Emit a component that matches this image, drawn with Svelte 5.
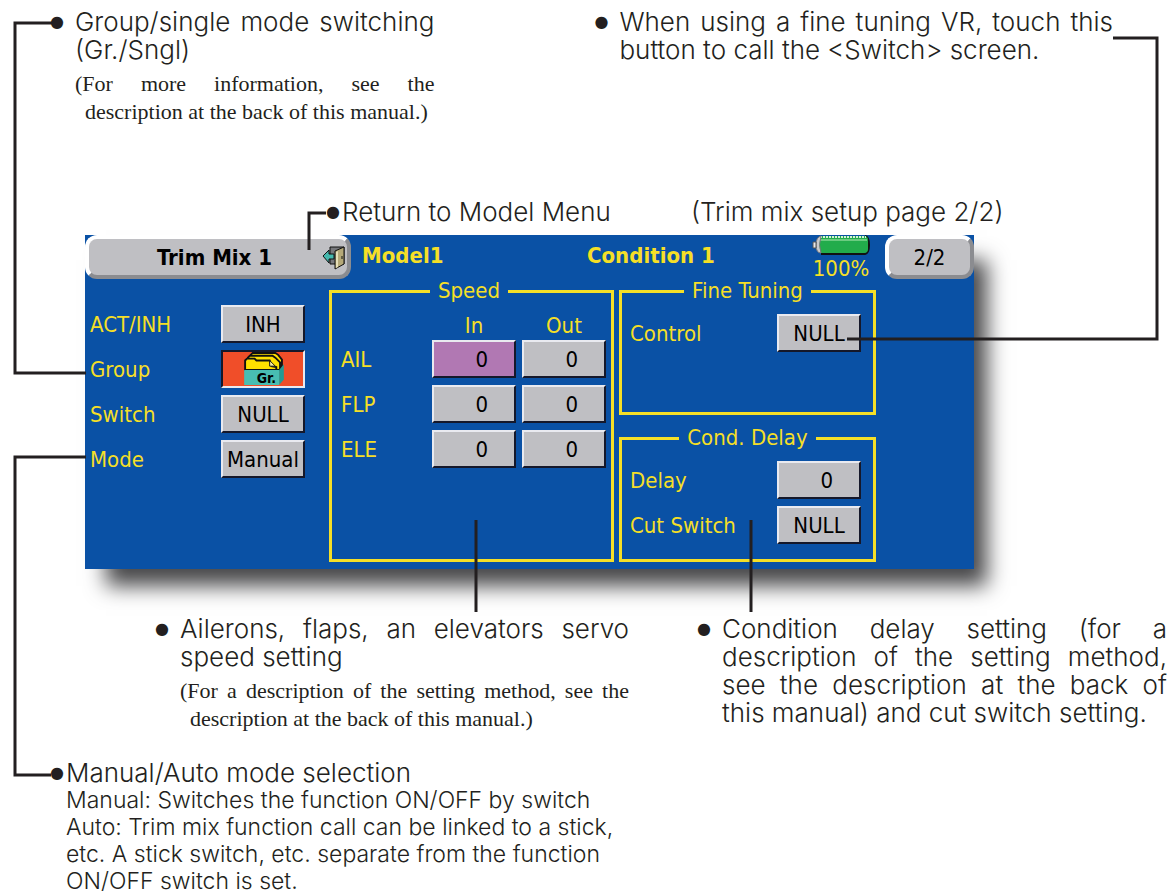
<script lang="ts">
    interface ISetting {
        id: string;
        label: string;
        value: string;
    }

    const settings: ISetting[] = [
        { id: 'act', label: 'ACT/INH', value: 'INH' },
        { id: 'group', label: 'Group', value: 'Gr.' },
        { id: 'switch', label: 'Switch', value: 'NULL' },
        { id: 'mode', label: 'Mode', value: 'Manual' }
    ];

    const surfaces = ['AIL', 'FLP', 'ELE'];
    const directions = ['In', 'Out'];

    let selected = $state('AIL-In');
</script>

<main>
    <svg class="leaders" viewBox="0 0 1176 895" preserveAspectRatio="none" aria-hidden="true">
        <path d="M52 23H15V373H86" />
        <path d="M86 457H15V775H51" />
        <path d="M1113 38H1157V339H847" />
        <path d="M326 213H309V250" />
        <path d="M476 520V612" />
        <path d="M751 520V612" />
    </svg>

    <div class="notes top">
        <section class="note">
            <span class="dot">●</span>
            <div>
                <p class="fill">Group/single mode switching</p>
                <p>(Gr./Sngl)</p>
                <div class="small">
                    <p class="fill">(For more information, see the</p>
                    <p class="inset">description at the back of this manual.)</p>
                </div>
            </div>
        </section>
        <section class="note">
            <span class="dot">●</span>
            <div>
                <p class="fill">When using a fine tuning VR, touch this</p>
                <p>button to call the &lt;Switch&gt; screen.</p>
            </div>
        </section>
    </div>

    <div class="captions">
        <p class="lead"><span class="dot">●</span>Return to Model Menu</p>
        <p>(Trim mix setup page 2/2)</p>
    </div>

    <div class="screen">
        <header>
            <button class="tab title">
                <span>Trim Mix 1</span>
                <svg width="26" height="26" viewBox="0 0 26 26" aria-hidden="true">
                    <path d="M9 2h14v17H9z" fill="#77787c" stroke="#111" />
                    <path d="M14 6l9-4v17l-9 5z" fill="#b5a978" stroke="#111" />
                    <path d="M15 7l2-1v16l-2 1z" fill="#e6dfb8" />
                    <path d="M21 11v3" stroke="#111" />
                    <path d="M2 11l6-6v4h5v5H8v4z" fill="#45b8ad" stroke="#111" />
                </svg>
            </button>
            <strong class="model">Model1</strong>
            <strong class="condition">Condition 1</strong>
            <div class="battery">
                <svg width="58" height="20" viewBox="0 0 58 20" aria-hidden="true">
                    <path d="M9 19h44q4-1 4-9t-4-9" fill="none" stroke="#111" stroke-width="2" />
                    <rect x="6" y="1" width="50" height="17" rx="4" fill="#22ac4b" />
                    <path d="M8 2h46" stroke="#d6f0da" stroke-width="2" stroke-dasharray="2 1" />
                    <path d="M8 5h47" stroke="#6bcb80" stroke-width="2" />
                    <path d="M9 1q-5 1-5 9t5 8q-3-8 0-17z" fill="#c9cacd" stroke="#77787c" />
                    <path d="M4 7H1v6h3z" fill="#e7e7e9" stroke="#555" />
                </svg>
                <span>100%</span>
            </div>
            <button class="tab page">2/2</button>
        </header>

        <div class="body">
            <div class="settings">
                {#each settings as setting}
                    <label for={setting.id}>{setting.label}</label>
                    {#if setting.id === 'group'}
                        <button id={setting.id} class="key group">
                            <svg width="44" height="34" viewBox="0 0 44 36" aria-hidden="true">
                                <path d="M8 18V3l2-2h24l3 2 4 5v10z" fill="#ffe100" stroke="#111" stroke-width="2" />
                                <path d="M5 18V6l2-2h24l3 2 5 5v8z" fill="#ffe100" stroke="#111" stroke-width="2" />
                                <path d="M2 19V9l2-2h8l2 2h14l2 6 5 1v3z" fill="#ffe100" stroke="#111" stroke-width="2" />
                                <path d="M28 9v6h6z" fill="#fff3a0" stroke="#111" />
                                <path d="M38 19l5-6v16l-5 6z" fill="#239b94" />
                                <path d="M1 19h37v16H1z" fill="#48bdb2" />
                            </svg>
                            <span>{setting.value}</span>
                        </button>
                    {:else}
                        <button id={setting.id} class="key">{setting.value}</button>
                    {/if}
                {/each}
            </div>

            <fieldset class="speed">
                <legend>Speed</legend>
                <table>
                    <thead>
                        <tr>
                            <th></th>
                            {#each directions as direction}
                                <th>{direction}</th>
                            {/each}
                        </tr>
                    </thead>
                    <tbody>
                        {#each surfaces as surface}
                            <tr>
                                <th scope="row">{surface}</th>
                                {#each directions as direction}
                                    <td>
                                        <button
                                            class="key number"
                                            class:selected={selected === `${surface}-${direction}`}
                                            onclick={() => (selected = `${surface}-${direction}`)}
                                        >0</button>
                                    </td>
                                {/each}
                            </tr>
                        {/each}
                    </tbody>
                </table>
            </fieldset>

            <div class="side">
                <fieldset>
                    <legend>Fine Tuning</legend>
                    <div class="row">
                        <label for="control">Control</label>
                        <button id="control" class="key">NULL</button>
                    </div>
                </fieldset>
                <fieldset>
                    <legend>Cond. Delay</legend>
                    <div class="row">
                        <label for="delay">Delay</label>
                        <button id="delay" class="key number">0</button>
                    </div>
                    <div class="row">
                        <label for="cut">Cut Switch</label>
                        <button id="cut" class="key">NULL</button>
                    </div>
                </fieldset>
            </div>
        </div>
    </div>

    <div class="notes bottom">
        <section class="note">
            <span class="dot">●</span>
            <div>
                <p class="fill">Ailerons, flaps, an elevators servo</p>
                <p>speed setting</p>
                <div class="small">
                    <p class="fill">(For a description of the setting method, see the</p>
                    <p class="inset">description at the back of this manual.)</p>
                </div>
            </div>
        </section>
        <section class="note">
            <span class="dot">●</span>
            <div>
                <p class="fill">Condition delay setting (for a</p>
                <p class="fill">description of the setting method,</p>
                <p class="fill">see the description at the back of</p>
                <p>this manual) and cut switch setting.</p>
            </div>
        </section>
    </div>

    <section class="mode">
        <p class="lead"><span class="dot">●</span>Manual/Auto mode selection</p>
        <div class="details">
            <p>Manual: Switches the function ON/OFF by switch</p>
            <p>Auto: Trim mix function call can be linked to a stick,</p>
            <p>etc. A stick switch, etc. separate from the function</p>
            <p>ON/OFF switch is set.</p>
        </div>
    </section>
</main>

<style>
    :global(body) {
        background: #fff;
    }

    main {
        position: relative;
        box-sizing: border-box;
        min-height: 100vh;
        padding-top: 8px;
        color: #231f20;
        font-family: "Century Gothic", Inter, sans-serif;
        font-size: 26px;
        font-weight: 300;
        line-height: 28px;
    }

    p {
        margin: 0;
        white-space: nowrap;
    }

    .leaders {
        position: absolute;
        inset: 0;
        z-index: 1;
        width: 100%;
        height: 100%;
        pointer-events: none;

        & path {
            fill: none;
            stroke: #231f20;
            stroke-width: 3;
            vector-effect: non-scaling-stroke;
        }
    }

    .dot {
        flex: none;
        width: 16px;
        font-family: "DejaVu Sans", sans-serif;
        font-size: 16px;
        font-weight: 400;
    }

    .lead {
        display: flex;
    }

    .notes {
        display: grid;
    }

    .note {
        display: flex;
        gap: 9px;

        & > div {
            flex: 1;
        }
    }

    .fill {
        text-align-last: justify;
    }

    .small {
        margin-top: 6px;
        font-family: "Liberation Serif", serif;
        font-size: 22px;
        font-weight: 400;
    }

    .inset {
        padding-left: 10px;
    }

    .top {
        grid-template-columns: 384fr 518fr;
        gap: 160px;
        height: 190px;
        padding: 0 63px 0 50px;
    }

    .captions {
        display: grid;
        grid-template-columns: 365fr 485fr;
        padding: 0 0 9px 326px;
    }

    .screen {
        display: flex;
        flex-direction: column;
        min-height: 334px;
        margin: 0 202px 0 85px;
        background: #0a51a5;
        box-shadow: 17px 21px 20px -4px #48484a;
        color: #f5df27;
        font-family: "DejaVu Sans Condensed", "DejaVu Sans", sans-serif;
        font-size: 22px;
        font-weight: 400;
        line-height: 24px;
    }

    header {
        display: grid;
        grid-template-columns: 266fr 236fr 214fr 84fr 89fr;
        height: 44px;
    }

    button {
        box-sizing: border-box;
        margin: 0;
        padding: 2px 0 0;
        color: #000;
        font: inherit;
    }

    label {
        padding-top: 2px;
    }

    .tab {
        height: 44px;
        border: 4px solid;
        border-color: #fff #8b8c90 #8b8c90 #fff;
        border-radius: 12px;
        background: #bfbfc3;
    }

    .title {
        display: flex;
        align-items: center;
        justify-content: space-between;
        padding-left: 68px;
        font-weight: bold;
    }

    .model,
    .condition {
        padding-top: 9px;
    }

    .model {
        padding-left: 11px;
    }

    .battery {
        display: flex;
        flex-direction: column;
        align-items: center;
        padding-right: 4px;
        line-height: 28px;
    }

    .body {
        display: grid;
        grid-template-columns: 234fr 285fr 257fr;
        gap: 5px;
        flex: 1;
        padding: 0 98px 7px 5px;
    }

    .settings {
        display: grid;
        grid-template-columns: 1fr 84px;
        align-content: start;
        align-items: center;
        gap: 7px 0;
        padding: 26px 19px 0 0;
    }

    .key {
        display: block;
        width: 84px;
        height: 38px;
        border: 2px solid;
        border-color: #e9eaf0 #15182a #15182a #e9eaf0;
        background: #bfbfc3;
    }

    .number {
        padding-right: 26px;
        text-align: right;
    }

    .selected {
        background: #b178b3;
    }

    .group {
        position: relative;
        padding-top: 0;
        border-color: #15182a #e9eaf0 #e9eaf0 #15182a;
        background: #f04e29;

        & svg {
            display: block;
            margin-left: 19px;
        }

        & span {
            position: absolute;
            right: 27px;
            bottom: 0;
            font-size: 14px;
            font-weight: bold;
            line-height: 16px;
        }
    }

    fieldset {
        min-width: 0;
        margin: 0;
        padding: 0;
        border: 3px solid #f5df27;
    }

    legend {
        margin: 0 auto 11px;
        padding: 0 8px;
    }

    table {
        width: 100%;
        border-collapse: collapse;
    }

    th {
        height: 24px;
        padding: 0 0 2px 6px;
        font-weight: normal;
    }

    tbody th {
        padding: 0 0 5px 9px;
        text-align: left;
    }

    td {
        width: 84px;
        padding: 0 0 7px 6px;
    }

    .speed {
        padding-right: 5px;
    }

    .side {
        display: grid;
        grid-template-rows: 1fr 1fr;
        gap: 11px;
    }

    .row {
        display: flex;
        align-items: center;
        justify-content: space-between;
        margin-bottom: 7px;
        padding: 0 12px 0 8px;
    }

    .bottom {
        grid-template-columns: 474fr 470fr;
        gap: 68px;
        padding: 46px 9px 0 155px;
    }

    .mode {
        padding: 26px 0 0 50px;
    }

    .details {
        padding-left: 16px;
        font-size: 23px;
        line-height: 27px;
    }
</style>
